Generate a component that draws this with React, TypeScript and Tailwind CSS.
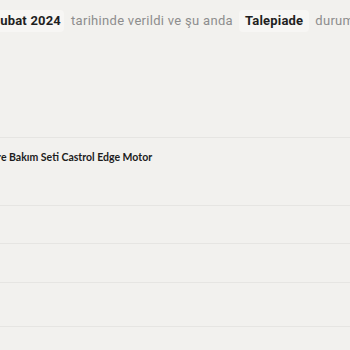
export default function App() {
  return (
    <div className="h-[350px] w-[350px] overflow-hidden bg-[#f2f1ee]">
      <div className="flex h-[137px] items-start pt-[10px]">
        <p className="-ml-[11px] flex shrink-0 items-center whitespace-nowrap font-['Roboto',sans-serif] text-[13px]">
          <span className="rounded bg-[#f7f6f4] px-[3px] py-[1px] font-bold tracking-[0.2px] text-[#1f1f1f]">Şubat 2024</span>
          <span className="ml-[7px] tracking-[0.3px] text-[#8d8d8d]">tarihinde verildi ve şu anda</span>
          <span className="ml-[6px] rounded bg-[#f7f6f4] px-[6px] py-[1px] font-bold tracking-[0.2px] text-[#1f1f1f]">Talepiade</span>
          <span className="ml-[6px] tracking-[0.3px] text-[#8d8d8d]">durumunda</span>
        </p>
      </div>
      <div className="h-[68px] border-t border-[#e6e5e2] pt-[12px]">
        <p className="-ml-[18px] whitespace-nowrap font-['Lato',sans-serif] text-[10.5px] font-bold text-[#1c1c1c]">
          Filtre Bakım Seti Castrol Edge Motor
        </p>
      </div>
      <div className="h-[38px] border-t border-[#e6e5e2]" />
      <div className="h-[39px] border-t border-[#e6e5e2]" />
      <div className="h-[44px] border-t border-[#e6e5e2]" />
      <div className="h-[24px] border-t border-[#e6e5e2]" />
    </div>
  );
}
